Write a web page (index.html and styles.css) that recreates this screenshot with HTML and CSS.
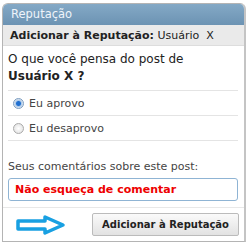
FILE: index.html
```html
<!DOCTYPE html>
<html>
<head>
<meta charset="utf-8">
<link rel="stylesheet" href="styles.css">
</head>
<body>
<div class="panel">
  <div class="head">Reputação</div>
  <div class="sub"><b>Adicionar à Reputação:</b> Usuário&nbsp; X</div>
  <div class="body">
    <div class="question">O que você pensa do post de <b>Usuário X ?</b></div>
    <div class="options">
      <label class="opt"><span class="radio on"></span>Eu aprovo</label>
      <label class="opt"><span class="radio"></span>Eu desaprovo</label>
    </div>
    <div class="comment">
      <div class="clabel">Seus comentários sobre este post:</div>
      <div class="box">Não esqueça de comentar</div>
    </div>
  </div>
  <div class="foot">
    <svg class="arrow" width="52" height="22" viewBox="0 0 52 22"><path d="M3 7 H30 V3 L48 11 L30 19 V15 H3 Z" fill="none" stroke="#18a0e2" stroke-width="3.5" stroke-linejoin="round"/></svg>
    <button class="btn">Adicionar à Reputação</button>
  </div>
</div>
</body>
</html>
```
FILE: styles.css
```css
html, body { margin: 0; padding: 0; background: #fff; }
body { padding: 3px 4px 3px 2px; font-family: "DejaVu Sans", Verdana, sans-serif; font-size: 11px; color: #333; }
.panel { border: 1px solid #b4b4b4; border-right: 2px solid #c4c4c4; border-radius: 6px 6px 0 0; overflow: hidden; }
.head { background: linear-gradient(#84a9c6, #6c93b3); color: #eef4fa; height: 21px; line-height: 20px; padding-left: 8px; font-size: 11.5px; }
.sub { background: #eaeaea; height: 20px; line-height: 21px; padding-left: 7px; color: #222; border-bottom: 1px solid #ddd; }
.sub b { font-weight: bold; }
.body { padding: 5px 6px 0 5px; }
.question { font-size: 12px; line-height: 17px; color: #222; }
.options { margin-top: 5px; border-top: 1px solid #e4e4e4; border-bottom: 1px solid #e4e4e4; }
.opt { display: flex; align-items: center; gap: 5px; height: 24px; padding-left: 5px; color: #444; font-size: 11px; }
.opt + .opt { border-top: 1px solid #e4e4e4; }
.radio { width: 9px; height: 9px; border-radius: 50%; border: 1px solid #aaa; background: radial-gradient(#fff, #ddd); }
.radio.on { background: radial-gradient(circle, #1f6fd0 0 2px, #aac8ea 3px, #f0f0f0 5px); border-color: #7a9cc0; }
.comment { padding: 19px 0 6px; }
.clabel { color: #444; line-height: 14px; }
.box { margin-top: 4px; border: 1px solid #8fb4d4; border-radius: 3px; height: 21px; line-height: 21px; padding-left: 6px; color: #e00; font-weight: bold; }
.foot { display: flex; align-items: center; justify-content: space-between; padding: 5px 5px 5px 12px; border-top: 1px solid #e8e8e8; }
.arrow { display: block; }
.btn { font-family: "DejaVu Sans", Verdana, sans-serif; font-size: 10px; font-weight: bold; color: #222; height: 23px; padding: 0 9px; border: 1px solid #bbb; border-radius: 2px; background: linear-gradient(#fafafa, #e2e2e2); }
```
